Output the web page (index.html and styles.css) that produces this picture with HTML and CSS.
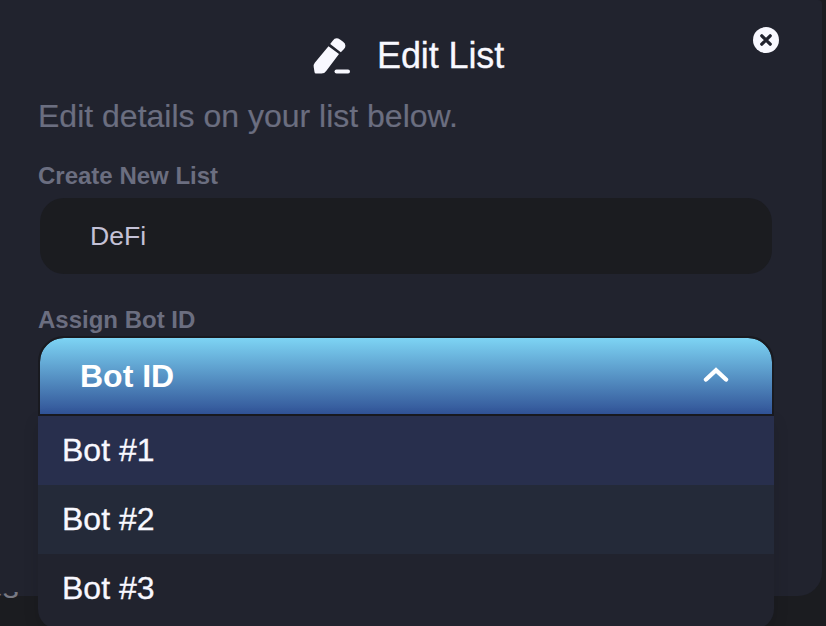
FILE: index.html
```
<!DOCTYPE html>
<html lang="en">
<head>
<meta charset="utf-8">
<title>Edit List</title>
<link rel="stylesheet" href="styles.css">
</head>
<body>
<main class="modal">
  <button class="close" aria-label="Close">
    <svg width="26" height="26" viewBox="0 0 26 26"><circle cx="13" cy="13" r="13" fill="#f8f8ff"/><path d="M8.8 8.8l8.4 8.4M17.2 8.8l-8.4 8.4" stroke="#20222e" stroke-width="3.3" stroke-linecap="round"/></svg>
  </button>
  <header class="heading">
    <svg width="37" height="38" viewBox="0 0 37 38" fill="#f8f8ff"><path d="M15.5 9.3L26 17.1 13.2 34Q11.5 36.5 8.5 36.5H3Q1.6 36.5 1.5 35L.7 30Q.2 27.7 1.8 25.7Z"/><path d="M17.2 6.9L19.7 3.7Q22.7-.4 27 2.5L30.1 4.8Q34.2 8 31 12L27.8 15.2Z"/><rect x="21.5" y="32.5" width="15.5" height="4" rx="2"/></svg>
    <h1>Edit List</h1>
  </header>
  <p class="intro">Edit details on your list below.</p>
  <label class="label" for="name">Create New List</label>
  <input class="field" id="name" value="DeFi">
  <div class="label label-bot">Assign Bot ID</div>
  <div class="select">
    <div class="select-head">
      <span>Bot ID</span>
      <svg width="26" height="16" viewBox="0 0 26 16"><path d="M3 12.5L13 3.2 23 12.5" fill="none" stroke="#fff" stroke-width="4.4" stroke-linecap="round"/></svg>
    </div>
    <ul class="options">
      <li class="active">Bot #1</li>
      <li class="alternate">Bot #2</li>
      <li>Bot #3</li>
    </ul>
  </div>
</main>
<div class="page-strip"><span>es</span></div>
</body>
</html>
```
FILE: styles.css
```
* { box-sizing: border-box; }
html, body { height: 626px; overflow: hidden; }
body { margin: 0; background: #1b1c20; font-family: "Liberation Sans", Arial, sans-serif; color: #f8f8ff; }
.page-strip { position: absolute; left: 0; top: 592px; width: 36px; height: 8px; overflow: hidden; }
.page-strip span { position: absolute; left: -15px; top: -21px; font-size: 32px; line-height: 32px; color: #777983; }
.modal { position: relative; width: 822px; height: 596px; padding: 32px 48px 0 38px; background: #21232e; border-radius: 0 4px 24px 0; }
.close { position: absolute; left: 753px; top: 27px; padding: 0; border: 0; background: none; line-height: 0; }
.heading { display: flex; align-items: center; height: 48px; padding-left: 275px; gap: 27px; }
.heading svg { margin-top: 0; }
.heading h1 { margin: 0; font-size: 36px; line-height: 48px; font-weight: 400; letter-spacing: -.1px; -webkit-text-stroke: .3px; }
.intro { margin: 16px 0 0; font-size: 32px; line-height: 40px; color: #6b6e80; white-space: nowrap; -webkit-text-stroke: .2px; }
.label { display: block; margin-top: 24px; font-size: 24px; line-height: 32px; font-weight: 700; color: #6b6e80; }
.field { display: block; width: 732px; height: 76px; margin: 6px 0 0 2px; padding: 0 50px; border: 0; border-radius: 24px; background: #1b1c20; color: #c4c1d6; font: 26.6px/30px "Liberation Sans", Arial, sans-serif; }
.label-bot { margin-top: 30px; }
.select { width: 736px; }
.select-head { display: flex; align-items: center; justify-content: space-between; height: 80px; padding: 0 43px 0 40px; border: 2px solid #191a20; border-radius: 26px 26px 0 0; background: linear-gradient(#7dd4f4, #315397) padding-box; color: #fff; font-size: 32px; font-weight: 700; }
.select-head svg { margin-bottom: 2px; }
.options { margin: 0; padding: 0; list-style: none; background: #21232e; border-radius: 0 0 20px 20px; box-shadow: 0 6px 16px rgba(0, 0, 0, .12); overflow: hidden; }
.options li { height: 69px; padding-left: 24px; font-size: 32px; line-height: 69px; -webkit-text-stroke: .3px; }
.options li:last-child { height: 75px; }
.options .active { background: #282f4d; }
.options .alternate { background: #242a39; }
```
